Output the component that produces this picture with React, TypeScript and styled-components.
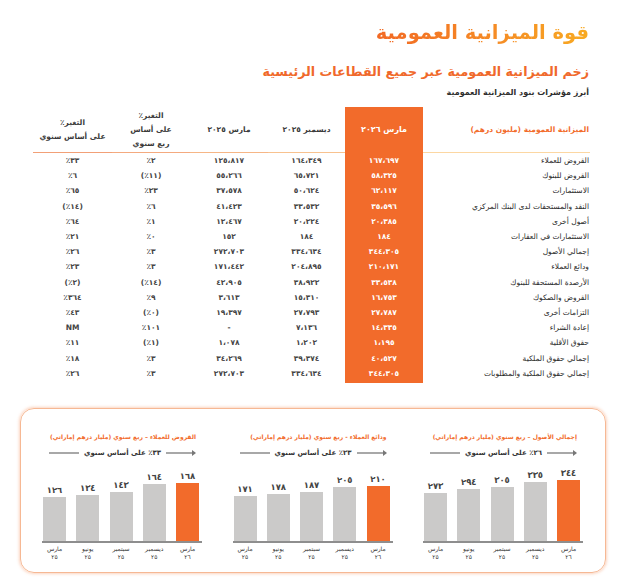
import React from "react";
import styled, { createGlobalStyle } from "styled-components";

const Global = createGlobalStyle`
  html, body { margin: 0; padding: 0; background: #ffffff; }
  body {
    width: 624px;
    height: 587px;
    overflow: hidden;
    font-family: "DejaVu Sans", sans-serif;
    color: #333333;
  }
`;

const ORANGE = "#f26b2b";

const Page = styled.div`
  width: 624px;
  height: 587px;
  box-sizing: border-box;
  direction: rtl;
  display: flex;
  flex-direction: column;
`;

const Header = styled.header`
  padding-right: 35px;
  display: flex;
  flex-direction: column;
  align-items: flex-start;
`;

const Title = styled.h1`
  margin: 19px 0 0 0;
  font-size: 19.5px;
  line-height: 28px;
  font-weight: bold;
  background: linear-gradient(to left, #f8aa22 0%, #f58b25 45%, #f26924 100%);
  -webkit-background-clip: text;
  background-clip: text;
  color: transparent;
  white-space: nowrap;
`;

const Subtitle = styled.h2`
  margin: 16px 0 0 0;
  font-size: 12.7px;
  line-height: 18px;
  font-weight: bold;
  color: #f0692b;
  white-space: nowrap;
`;

const Caption = styled.h3`
  margin: 6px 0 0 0;
  font-size: 8px;
  line-height: 12px;
  font-weight: bold;
  color: #2e2e2e;
  white-space: nowrap;
`;

const Table = styled.div`
  margin: 8px 34px 0 33px;
  display: grid;
  grid-template-columns: 167px 78px 77px 78px 78px 79px;
  direction: rtl;
`;

type Kind = "label" | "current" | "normal";

const HeadCell = styled.div<{ $kind: Kind; $line: string }>`
  height: 46px;
  box-sizing: border-box;
  display: flex;
  flex-direction: column;
  justify-content: center;
  align-items: ${(p) => (p.$kind === "label" ? "flex-start" : "center")};
  padding-right: ${(p) => (p.$kind === "label" ? "1px" : "0")};
  text-align: center;
  font-weight: bold;
  font-size: ${(p) => (p.$kind === "current" ? "8px" : "7.5px")};
  line-height: 14px;
  white-space: nowrap;
  color: ${(p) =>
    p.$kind === "label" ? ORANGE : p.$kind === "current" ? "#ffffff" : "#3a3a3a"};
  background: ${(p) => (p.$kind === "current" ? ORANGE : "transparent")};
  border-bottom: ${(p) => (p.$kind === "current" ? "none" : `1.5px solid ${p.$line}`)};
`;

const Cell = styled.div<{ $kind: Kind }>`
  height: 15.2px;
  display: flex;
  align-items: center;
  justify-content: ${(p) => (p.$kind === "label" ? "flex-start" : "center")};
  padding-right: ${(p) => (p.$kind === "label" ? "1px" : "0")};
  white-space: nowrap;
  font-size: 7.5px;
  font-weight: ${(p) => (p.$kind === "label" ? "normal" : "bold")};
  color: ${(p) =>
    p.$kind === "current" ? "#ffffff" : p.$kind === "label" ? "#2a2a2a" : "#444444"};
  background: ${(p) => (p.$kind === "current" ? ORANGE : "transparent")};
`;

const ColumnTail = styled.div`
  grid-column: 2;
  height: 2px;
  background: ${ORANGE};
`;

const Panel = styled.section`
  margin: 25px 18px 0 20px;
  border: 1px solid #f6b894;
  border-radius: 14px;
  box-shadow: 0 0 3px 1px rgba(246, 160, 115, 0.45);
  padding: 24px 22px 11px 21px;
  display: flex;
  justify-content: space-between;
  direction: rtl;
`;

const ChartBox = styled.div`
  width: 160px;
  display: flex;
  flex-direction: column;
`;

const ChartTitle = styled.div`
  padding-right: 6px;
  font-size: 6px;
  line-height: 8px;
  font-weight: bold;
  color: ${ORANGE};
  white-space: nowrap;
  text-align: right;
`;

const GrowthRow = styled.div`
  margin-top: 8px;
  height: 8px;
  display: flex;
  direction: ltr;
  align-items: center;
  padding: 0 6px 0 7px;
`;

const Rule = styled.div`
  width: 30px;
  height: 1.5px;
  background: #a8a8a8;
`;

const ArrowRule = styled.div`
  width: 30px;
  display: flex;
  align-items: center;
`;

const GrowthText = styled.div`
  flex: 1;
  text-align: center;
  direction: rtl;
  font-size: 7px;
  line-height: 8px;
  font-weight: bold;
  color: #333333;
  white-space: nowrap;
`;

const Bars = styled.div`
  margin-top: 2px;
  height: 82px;
  display: flex;
  direction: ltr;
  align-items: flex-end;
  justify-content: space-between;
  padding: 0 3px 0 1px;
`;

const BarCol = styled.div`
  width: 23px;
  display: flex;
  flex-direction: column;
  align-items: center;
`;

const BarValue = styled.div`
  font-size: 8.5px;
  line-height: 10px;
  font-weight: bold;
  color: #444444;
  margin-bottom: 2px;
  white-space: nowrap;
`;

const Bar = styled.div<{ $current: boolean }>`
  width: 23px;
  background: ${(p) => (p.$current ? ORANGE : "#cbcac9")};
`;

const Axis = styled.div`
  height: 2px;
  background: #8e8e8e;
`;

const XLabels = styled.div`
  margin-top: 2px;
  display: flex;
  direction: ltr;
  justify-content: space-between;
  padding: 0 3px 0 1px;
`;

const XLabel = styled.div`
  width: 23px;
  display: flex;
  flex-direction: column;
  align-items: center;
  direction: rtl;
  font-size: 6px;
  line-height: 8px;
  color: #333333;
  white-space: nowrap;
`;

type Row = [string, string, string, string, string, string];

const rows: Row[] = [
  ["القروض للعملاء", "١٦٧،٦٩٧", "١٦٤،٣٤٩", "١٢٥،٨١٧", "٢٪", "٣٣٪"],
  ["القروض للبنوك", "٥٨،٣٢٥", "٦٥،٧٢١", "٥٥،٢٦٦", "(١١٪)", "٦٪"],
  ["الاستثمارات", "٦٢،١١٧", "٥٠،٦٢٤", "٣٧،٥٧٨", "٢٣٪", "٦٥٪"],
  ["النقد والمستحقات لدى البنك المركزي", "٣٥،٥٩٦", "٣٣،٥٣٢", "٤١،٤٢٣", "٦٪", "(١٤٪)"],
  ["أصول أخرى", "٢٠،٣٨٥", "٢٠،٢٢٤", "١٢،٤٦٧", "١٪", "٦٤٪"],
  ["الاستثمارات في العقارات", "١٨٤", "١٨٤", "١٥٢", "٠٪", "٢١٪"],
  ["إجمالي الأصول", "٣٤٤،٣٠٥", "٣٣٤،٦٣٤", "٢٧٢،٧٠٣", "٣٪", "٢٦٪"],
  ["ودائع العملاء", "٢١٠،١٧١", "٢٠٤،٨٩٥", "١٧١،٤٤٢", "٣٪", "٢٣٪"],
  ["الأرصدة المستحقة للبنوك", "٣٣،٥٣٨", "٣٨،٩٢٢", "٤٢،٩٠٥", "(١٤٪)", "(٢٪)"],
  ["القروض والصكوك", "١٦،٧٥٣", "١٥،٣١٠", "٣،٦١٣", "٩٪", "٣٦٤٪"],
  ["التزامات أخرى", "٢٧،٧٨٧", "٢٧،٧٩٣", "١٩،٣٩٧", "(٠٪)", "٤٣٪"],
  ["إعادة الشراء", "١٤،٣٣٥", "٧،١٣٦", "-", "١٠١٪", "NM"],
  ["حقوق الأقلية", "١،١٩٥", "١،٢٠٢", "١،٠٧٨", "(١٪)", "١١٪"],
  ["إجمالي حقوق الملكية", "٤٠،٥٢٧", "٣٩،٣٧٤", "٣٤،٢٦٩", "٣٪", "١٨٪"],
  ["إجمالي حقوق الملكية والمطلوبات", "٣٤٤،٣٠٥", "٣٣٤،٦٣٤", "٢٧٢،٧٠٣", "٣٪", "٢٦٪"],
];

const heads: { kind: Kind; line: string; lines: string[] }[] = [
  { kind: "label", line: "#fcd7a2", lines: ["الميزانية العمومية (مليون درهم)"] },
  { kind: "current", line: ORANGE, lines: ["مارس ٢٠٢٦"] },
  { kind: "normal", line: "#f8c28f", lines: ["ديسمبر ٢٠٢٥"] },
  { kind: "normal", line: "#f6b686", lines: ["مارس ٢٠٢٥"] },
  { kind: "normal", line: "#f4aa7f", lines: ["التغير٪", "على أساس", "ربع سنوي"] },
  { kind: "normal", line: "#f2a077", lines: ["التغير٪", "على أساس سنوي"] },
];

const kindOf = (i: number): Kind => (i === 0 ? "label" : i === 1 ? "current" : "normal");

const periods: [string, string][] = [
  ["مارس", "٢٥"],
  ["يونيو", "٢٥"],
  ["سبتمبر", "٢٥"],
  ["ديسمبر", "٢٥"],
  ["مارس", "٢٦"],
];

type ChartData = {
  title: string;
  growth: string;
  values: number[];
  labels: string[];
  maxH: number;
};

const charts: ChartData[] = [
  {
    title: "إجمالي الأصول – ربع سنوي (مليار درهم إماراتي)",
    growth: "٢٦٪ على أساس سنوي",
    values: [273, 294, 305, 335, 344],
    labels: ["٢٧٣", "٢٩٤", "٣٠٥", "٣٣٥", "٣٤٤"],
    maxH: 61,
  },
  {
    title: "ودائع العملاء - ربع سنوي (مليار درهم إماراتي)",
    growth: "٢٣٪ على أساس سنوي",
    values: [171, 178, 187, 205, 210],
    labels: ["١٧١", "١٧٨", "١٨٧", "٢٠٥", "٢١٠"],
    maxH: 55,
  },
  {
    title: "القروض للعملاء – ربع سنوي (مليار درهم إماراتي)",
    growth: "٣٣٪ على أساس سنوي",
    values: [126, 134, 143, 164, 168],
    labels: ["١٢٦", "١٣٤", "١٤٣", "١٦٤", "١٦٨"],
    maxH: 58,
  },
];

const Chart: React.FC<{ data: ChartData }> = ({ data }) => {
  const max = Math.max(...data.values);
  return (
    <ChartBox>
      <ChartTitle>{data.title}</ChartTitle>
      <GrowthRow>
        <Rule />
        <GrowthText>{data.growth}</GrowthText>
        <ArrowRule>
          <Rule style={{ width: 26 }} />
          <svg width="4" height="6" viewBox="0 0 4 6">
            <polygon points="0,0 4,3 0,6" fill="#777777" />
          </svg>
        </ArrowRule>
      </GrowthRow>
      <Bars>
        {data.values.map((v, i) => (
          <BarCol key={i}>
            <BarValue>{data.labels[i]}</BarValue>
            <Bar
              $current={i === data.values.length - 1}
              style={{ height: Math.round((v / max) * data.maxH) }}
            />
          </BarCol>
        ))}
      </Bars>
      <Axis />
      <XLabels>
        {periods.map(([m, y], i) => (
          <XLabel key={i}>
            <span>{m}</span>
            <span>{y}</span>
          </XLabel>
        ))}
      </XLabels>
    </ChartBox>
  );
};

export default function App() {
  return (
    <>
      <Global />
      <Page>
        <Header>
          <Title>قوة الميزانية العمومية</Title>
          <Subtitle>زخم الميزانية العمومية عبر جميع القطاعات الرئيسية</Subtitle>
          <Caption>أبرز مؤشرات بنود الميزانية العمومية</Caption>
        </Header>
        <Table>
          {heads.map((h, i) => (
            <HeadCell key={i} $kind={h.kind} $line={h.line}>
              {h.lines.map((l, j) => (
                <span key={j}>{l}</span>
              ))}
            </HeadCell>
          ))}
          {rows.map((r, ri) =>
            r.map((c, ci) => (
              <Cell key={`${ri}-${ci}`} $kind={kindOf(ci)}>
                {c}
              </Cell>
            ))
          )}
          <ColumnTail />
        </Table>
        <Panel>
          {charts.map((c, i) => (
            <Chart key={i} data={c} />
          ))}
        </Panel>
      </Page>
    </>
  );
}
